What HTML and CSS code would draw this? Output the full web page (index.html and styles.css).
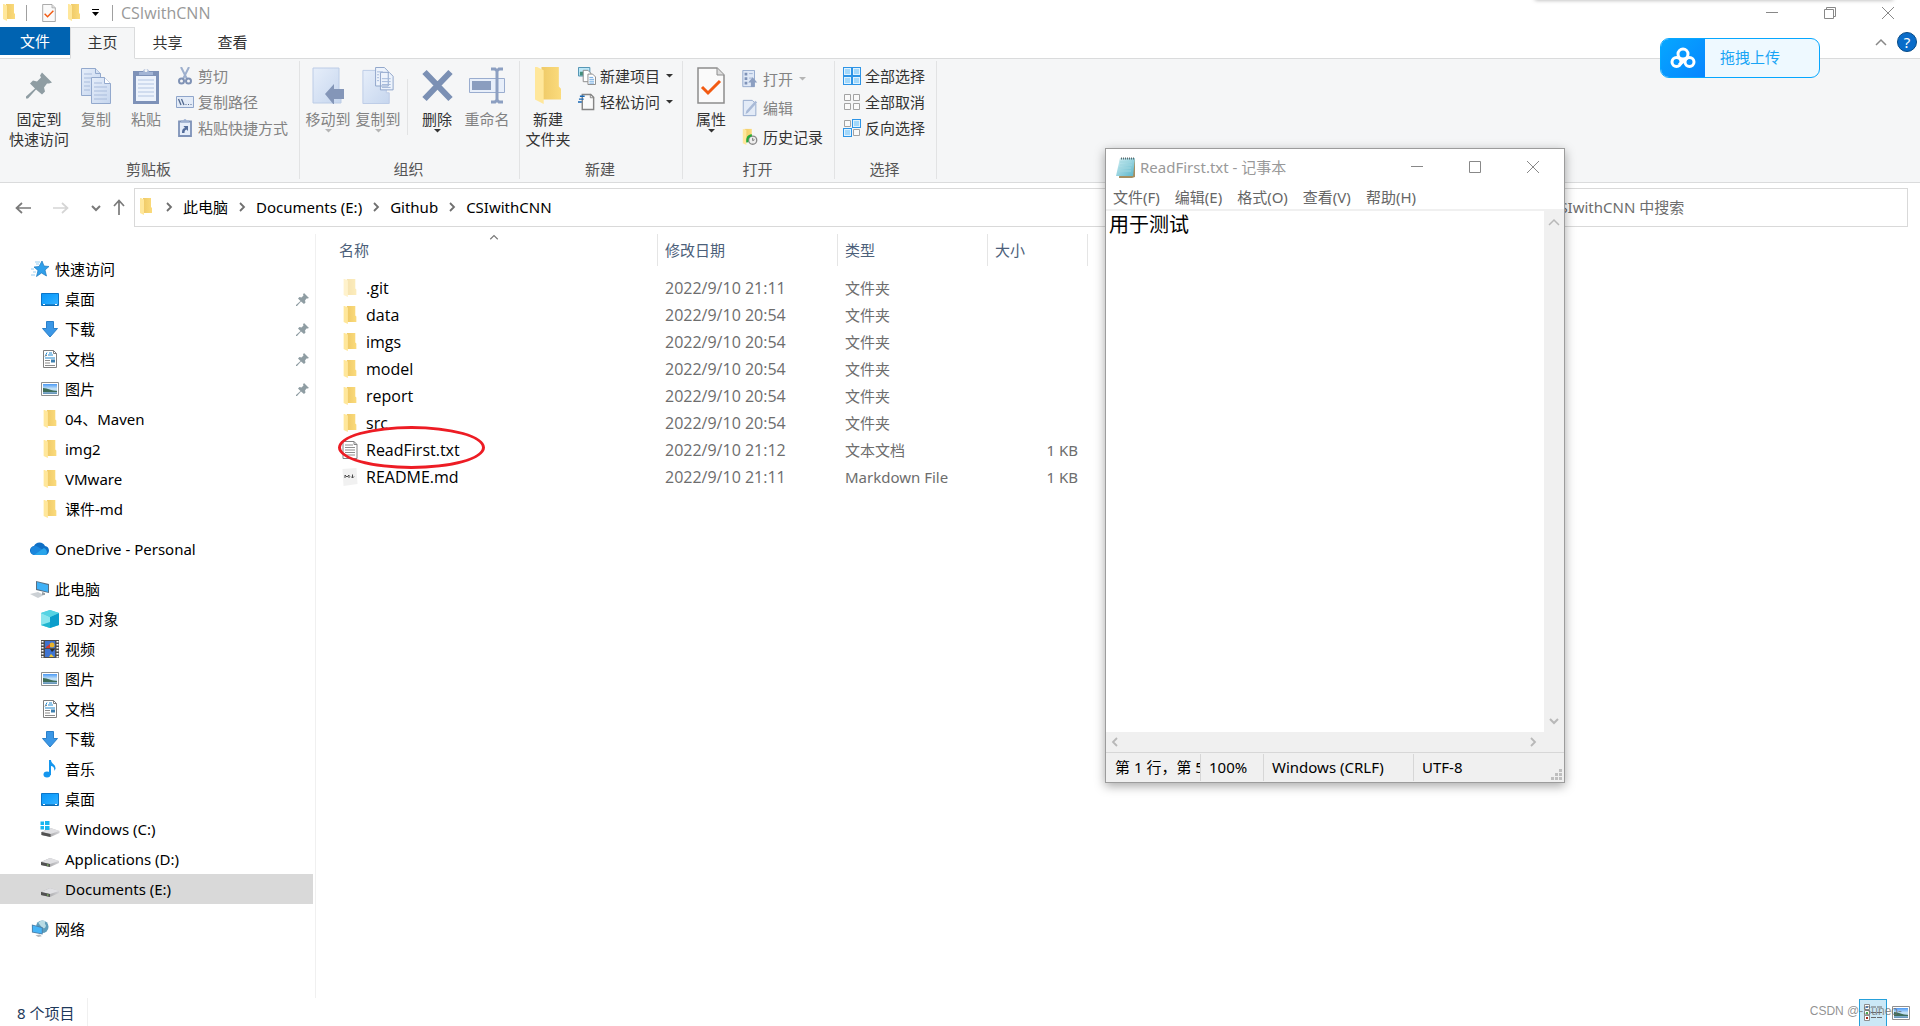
FILE: index.html
```html
<!DOCTYPE html>
<html lang="zh-CN">
<head>
<meta charset="utf-8">
<title>CSIwithCNN</title>
<link rel="stylesheet" href="styles.css">
</head>
<body>
<svg class="sprite" aria-hidden="true">
  <defs>
    <linearGradient id="gFolder" x1="0" x2="1" y1="0" y2="0"><stop offset="0" stop-color="#efca68"/><stop offset="1" stop-color="#fbdb7c"/></linearGradient>
    <linearGradient id="gDesk" x1="0" x2="1" y1="0" y2="1"><stop offset="0" stop-color="#0d94f5"/><stop offset=".5" stop-color="#1aa5ff"/><stop offset="1" stop-color="#3fb4ff"/></linearGradient>
    <linearGradient id="gPale" x1="0" x2="1" y1="0" y2="1"><stop offset="0" stop-color="#e6eefa"/><stop offset="1" stop-color="#c6d6ee"/></linearGradient>
    <linearGradient id="gSky" x1="0" x2="0" y1="0" y2="1"><stop offset="0" stop-color="#4c9af5"/><stop offset=".5" stop-color="#cbe6f7"/><stop offset="1" stop-color="#5e8fb5"/></linearGradient>
    <linearGradient id="gNote" x1="0" x2="1" y1="0" y2="1"><stop offset="0" stop-color="#d3f1f5"/><stop offset="1" stop-color="#5bb5c9"/></linearGradient>
    <linearGradient id="gDrive" x1="0" x2="1" y1="0" y2="0"><stop offset="0" stop-color="#8b8b8b"/><stop offset="1" stop-color="#d2d2d6"/></linearGradient>
  </defs>
  <symbol id="folder" viewBox="0 0 12 17"><path d="M3 0h8v9l1 1v5H3z" fill="url(#gFolder)"/><path d="M0 0h1l3 1.500v15.500L0 15z" fill="#ffe79b"/></symbol>
  <symbol id="check-doc" viewBox="0 0 28 37"><path d="M1 1h19l7 7v28H1z" fill="#fafafa" stroke="#8d8d8d" stroke-width="1.500"/><path d="M20 1v7h7" fill="#ddd" stroke="#8d8d8d"/><path d="M5 20l6 6L23 14" fill="none" stroke="#f25a12" stroke-width="3"/></symbol>
  <symbol id="pin" viewBox="0 0 26 26"><path d="M16 0l10 10-3 1-2 0-3 4 1 4-3 3-6-5-8 9-2 0 0-2 9-8-5-5 3-3 4 1 4-4-1-2z" fill="#8f9da3"/></symbol>
  <symbol id="docs" viewBox="0 0 30 37"><g fill="url(#gPale)" stroke="#93a9cd"><path d="M.5 1.500h14l5 5v22H.5z"/><path d="M14.500 1.500v5h5"/><path d="M10.500 10.500h13l6 6v20h-19z"/><path d="M23.500 10.500v6h6" fill="#fff"/></g><path d="M3 7h8M3 11h7M3 15h6M3 19h6M3 23h6M13 16h8M13 20h13M13 24h13M13 28h13M13 32h13" stroke="#a9bcdc"/></symbol>
  <symbol id="paste" viewBox="0 0 26 37"><path d="M0 4h26v33H0z" fill="#7e92b8"/><path d="M3 9h20v25H3z" fill="#edf3fc"/><path d="M5 13h16M5 17h16M5 21h16M5 25h16M5 29h16" stroke="#b3c5e2"/><path d="M6 8V5h4a3 3 0 0 1 6 0h4v3z" fill="#a3b5d5"/><circle cx="13" cy="3.500" r="1.500" fill="#f5f6f7"/></symbol>
  <symbol id="cut" viewBox="0 0 18 18"><path d="M5 0l6 12M13 0L7 12" stroke="#9dafcd" stroke-width="2" fill="none"/><circle cx="5.500" cy="14" r="2.500" fill="none" stroke="#7f92b5" stroke-width="2"/><circle cx="12.500" cy="14" r="2.500" fill="none" stroke="#7f92b5" stroke-width="2"/></symbol>
  <symbol id="copy-path" viewBox="0 0 18 18"><path d="M.5 3.500h17v11H.5z" fill="#e3ebf7" stroke="#8fa5ca"/><path d="M2.500 6l2.500 6M5.500 6L8 12" stroke="#52698f" stroke-width="1.300"/><path d="M9.500 11.500h6" stroke="#52698f" stroke-dasharray="1 1.500"/></symbol>
  <symbol id="paste-link" viewBox="0 0 18 18"><path d="M3 2.500h12v14.500H3z" fill="#e6eefa" stroke="#7e92b8" stroke-width="1.800"/><path d="M5 3.500V1.500h2.500a1.500 1.500 0 0 1 3 0H13v2z" fill="#9cafd0"/><path d="M6 14c0-3 .5-4.500 3-5L7.500 7H12v5l-1.500-1.500C9 11 8.500 12 8.500 14z" fill="#546d9b"/></symbol>
  <symbol id="move-to" viewBox="0 0 33 37"><path d="M1 1h26v23h2v12H1z" fill="url(#gPale)" stroke="#bccce6"/><path d="M13 27l9-10v5h10v10H22v6z" fill="#8496b8"/></symbol>
  <symbol id="copy-to" viewBox="0 0 33 38"><path d="M.5 3.500h24v23h3v11H.5z" fill="url(#gPale)" stroke="#bccce6"/><path d="M13.500.5h9l4 4v15h-13zM18.500 5.500h9l4 4v14h-13z" fill="#edf3fc" stroke="#8fa5ca"/><path d="M20 12h9M20 15h9M20 18h9M20 21h9M15 5h6M15 8h2M15 11h2M15 14h2" stroke="#a3b8da"/></symbol>
  <symbol id="delete" viewBox="0 0 32 37"><path d="M3 5l26 27M29 5L3 32" stroke="#7b90b4" stroke-width="6"/></symbol>
  <symbol id="rename" viewBox="0 0 36 37"><path d="M.5 11.500h35v14H.5z" fill="#e8effa" stroke="#9aadcf"/><path d="M3 14h19v9H3z" fill="#8a9dbf"/><path d="M22 2h4l2 2 2-2h4M28 4v29M22 35h4l2-2 2 2h4" fill="none" stroke="#8c9fc1" stroke-width="3"/></symbol>
  <symbol id="new-item" viewBox="0 0 19 19"><path d="M.5.5h12v9H.5z" fill="#bde8f8" stroke="#4a8fb0"/><path d="M2 5h5v4H2z" fill="#438f7c"/><path d="M5.500 3.500h5l3 3v9h-8z" fill="#fff" stroke="#8a8a8a"/><path d="M10.500 7.500h5l3 3v8h-8z" fill="#fff" stroke="#8a8a8a"/><path d="M12 11h4M12 13h5M12 15h5M12 17h5" stroke="#69a6e0"/></symbol>
  <symbol id="easy" viewBox="0 0 19 19"><path d="M4.500 1.500h9l3 3v13h-12z" fill="#fafafa" stroke="#858585" stroke-width="1.500"/><path d="M13 1v4h4" fill="none" stroke="#858585"/><path d="M2 3.500h5M1 6.500h5M0 9.500h4" stroke="#1667b5" stroke-width="1.500"/></symbol>
  <symbol id="open" viewBox="0 0 18 20"><path d="M1 .5h13v18H1z" fill="#dfe8f6" stroke="#8fa5ca"/><path d="M3 3h3v3H3zM3 8h3v3H3zM3 13h3v3H3z" fill="#7e92b8"/><path d="M8 4h4M8 9h4" stroke="#9cafd0"/><path d="M12 8l5 6h-3v5h-4v-5H7z" fill="#8c9fc1"/></symbol>
  <symbol id="edit" viewBox="0 0 18 20"><path d="M1.500 1.500h10l4 4v13h-14z" fill="#e3ebf7" stroke="#8fa5ca"/><path d="M4 17l1-4L15 2l2 2L7 15z" fill="#a9bad7"/></symbol>
  <symbol id="history" viewBox="0 0 18 20"><path d="M3 1h8v14H3z" fill="url(#gFolder)"/><path d="M1 1l4 1v17l-4-2z" fill="#ffe79b"/><circle cx="12" cy="13.500" r="4.500" fill="#eee" stroke="#888" stroke-width="1.500"/><path d="M12 11v3l2-1" fill="none" stroke="#666"/><path d="M6 16c-.5-5 2-7.500 5-8" fill="none" stroke="#23a83b" stroke-width="2.500"/></symbol>
  <symbol id="sel-all" viewBox="0 0 18 18"><path d="M0 0h18v18H0z" fill="#2d94e6"/><path d="M1 1h7v7H1zM10 1h7v7h-7zM1 10h7v7H1zM10 10h7v7h-7z" fill="#dff2fe"/><path d="M2 2h5v5H2zM11 2h5v5h-5zM2 11h5v5H2zM11 11h5v5h-5z" fill="#a3d8fb"/></symbol>
  <symbol id="sel-none" viewBox="0 0 18 18"><path d="M1.500 1.500h6v6h-6zM10.500 1.500h6v6h-6zM1.500 10.500h6v6h-6zM10.500 10.500h6v6h-6z" fill="#fafafa" stroke="#a3a3a3"/></symbol>
  <symbol id="sel-inv" viewBox="0 0 18 18"><path d="M1.500 1.500h6v6h-6zM10.500 10.500h6v6h-6z" fill="#fafafa" stroke="#a3a3a3"/><path d="M9 0h9v9H9zM0 9h9v9H0z" fill="#2d94e6"/><path d="M10 1h7v7h-7zM1 10h7v7H1z" fill="#dff2fe"/><path d="M11 2h5v5h-5zM2 11h5v5H2z" fill="#a3d8fb"/></symbol>
  <symbol id="star" viewBox="0 0 18 18"><path d="M11 1l2 5 5 .5-4 3.500 1.500 6-5-3-5 3.500 1.500-6L3 7l5-.5z" fill="#2f9fea" stroke="#1c79bd" stroke-width=".7"/><path d="M4 2h5M5 4h3M0 9h3M2 12h3M0 15h4" stroke="#7cc0ee" stroke-width=".8"/></symbol>
  <symbol id="desktop" viewBox="0 0 18 18"><path d="M.5 3.500h17v12H.5z" fill="url(#gDesk)" stroke="#0b76c9"/><path d="M1 15h16" stroke="#0a5d9e"/><path d="M2 14.500h2M14 14.500h2" stroke="#fff"/></symbol>
  <symbol id="download" viewBox="0 0 18 18"><path d="M5.500 1.500h7v7h4L9 17 1.500 8.500h4z" fill="#3b97e6" stroke="#2b80c9"/></symbol>
  <symbol id="document" viewBox="0 0 18 18"><path d="M2.500.5h10l3 3v14h-13z" fill="#fff" stroke="#7f7f7f"/><path d="M12.500.5v3h3" fill="none" stroke="#7f7f7f"/><path d="M4 6.500l2-4M8 3h3M7 5h5" stroke="#2389cf"/><path d="M4 8h10" stroke="#2389cf"/><path d="M4 10.500h5M4 13h5M4 15.500h10M4 5.500h2" stroke="#8b8b8b"/><path d="M10 9.500h4v3h-4z" fill="#3a7fb0"/></symbol>
  <symbol id="picture" viewBox="0 0 18 18"><path d="M.5 2.500h17v13H.5z" fill="#fff" stroke="#8f8f8f"/><path d="M2 4h14v10H2z" fill="url(#gSky)"/><path d="M2 8c5 0 8 3 14 3v1H2z" fill="#3f6e5a"/></symbol>
  <symbol id="cloud" viewBox="0 0 20 14"><path d="M5 13a4.500 4.500 0 0 1-1-9 6 6 0 0 1 11 0 4.700 4.700 0 0 1 1 9z" fill="#0f6fc5"/><path d="M4 4.200a5 5 0 0 1 4 .8l9 5-12 3a4.500 4.500 0 0 1-1-8.800z" fill="#1b86dc"/><path d="M4 13l10-7a4.500 4.500 0 0 1 2 7z" fill="#28a4ea"/></symbol>
  <symbol id="pc" viewBox="0 0 20 18"><path d="M6 1l13 3v9L6 10z" fill="#5a6f82"/><path d="M7 2l11 3v7L7 9z" fill="#3fb1f7"/><path d="M0 14l8-2 6 3-6 3z" fill="#ccd1d5"/><path d="M12 12l3 1v2h-3z" fill="#9aa2a8"/></symbol>
  <symbol id="cube" viewBox="0 0 18 18"><path d="M9 0l9 3v12l-9 3-9-3V3z" fill="#49cbe0"/><path d="M0 3l9 4v11l-9-3z" fill="#8ae5ee"/><path d="M9 7l9-4v12l-9 3z" fill="#0b9dcb"/><path d="M9 0l9 3-9 4-9-4z" fill="#55d3e3"/><path d="M0 15l9-3v6z" fill="#20b5cf"/></symbol>
  <symbol id="video" viewBox="0 0 18 18"><path d="M0 0h18v18H0z" fill="#4d4d4d"/><path d="M4 1h10v7H4zM4 9h10v8H4z" fill="#3f74d2"/><path d="M1.500 1v17M16.500 1v17" stroke="#fff" stroke-width="2" stroke-dasharray="1.500 1.500"/><circle cx="11" cy="5" r="2.500" fill="#e7b32b"/><path d="M5 7l4-3v4H5z" fill="#d53b31"/><path d="M8 17l2-3 3 3z" fill="#f1c92d"/><path d="M9 9h5l-3 3z" fill="#292929"/></symbol>
  <symbol id="music" viewBox="0 0 18 18"><ellipse cx="6" cy="14.500" rx="3.500" ry="3" fill="#1496ee"/><path d="M8 0h2c0 4 5 4 4.500 9l-1.500 2c1-3-1-5-3-5v9H8z" fill="#1496ee"/></symbol>
  <symbol id="drive" viewBox="0 0 18 18"><path d="M0 12l9-4 9 3v2l-9 4-9-2z" fill="url(#gDrive)"/><path d="M0 12l9-4 9 3-9 3z" fill="#e0e0e3"/><path d="M0 12l9 2v3l-9-2z" fill="#515151"/><path d="M6 14.500h1.500v1H6z" fill="#8bdc5e"/></symbol>
  <symbol id="win-drive" viewBox="0 0 19 18"><path d="M1 12l9-4 9 3v2l-9 4-9-2z" fill="url(#gDrive)"/><path d="M1 12l9-4 9 3-9 3z" fill="#e0e0e3"/><path d="M1 12l9 2v3l-9-2z" fill="#515151"/><path d="M0 1.500h3.500V5H0zM4.500 1H9v4H4.500zM0 6h3.500v3.500H0zM4.500 6H9v4H4.500z" fill="#19b6ef"/></symbol>
  <symbol id="network" viewBox="0 0 20 20"><circle cx="12.500" cy="7.500" r="7" fill="#5d9cba"/><path d="M8 3c3-3 7-3 8-1-2 3 2 3 0 6s-5-1-8-5z" fill="#b8dbe4"/><path d="M1 5l12 3v8L1 14z" fill="#4c7fa8"/><path d="M2 6l10 3v6L2 13z" fill="#46b4f6"/><path d="M5 17l5-1 2 2-4 1z" fill="#b3b9be"/></symbol>
  <symbol id="text-file" viewBox="0 0 15 18"><path d="M.5.500h11l3 3v14H.5z" fill="#fff" stroke="#828282"/><path d="M11.500.5v3h3" fill="none" stroke="#828282"/><path d="M2.500 4h8M2.500 6.500h10M2.500 9h10M2.500 11.500h10M2.500 14h10" stroke="#8f8f8f"/></symbol>
  <symbol id="md-file" viewBox="0 0 15 18"><path d="M0 1l14-1 1 16-14 2z" fill="#f1f1f1"/><path d="M2.500 10V7L4.500 9 6.500 7v3M10 6.500V10M8.500 8.500L10 10l1.500-1.500" fill="none" stroke="#4d4d4d"/></symbol>
  <symbol id="notepad" viewBox="0 0 20 21"><path d="M4 2h15v18l-3 1H3z" fill="#a58f61"/><path d="M4 1h15l-2 18H0z" fill="url(#gNote)"/><path d="M5 1.500h13" stroke="#5f6a6d" stroke-width="2" stroke-dasharray="1 1"/><path d="M4 5h12M4 8h12M3 11h12M3 14h12" stroke="#9fd6df"/></symbol>
  <symbol id="right" viewBox="0 0 8 10"><path d="M2 1l4 4-4 4" fill="none" stroke="currentColor" stroke-width="1.800"/></symbol>
  <symbol id="left" viewBox="0 0 8 10"><path d="M6 1L2 5l4 4" fill="none" stroke="currentColor" stroke-width="1.800"/></symbol>
  <symbol id="down" viewBox="0 0 10 8"><path d="M1 2l4 4 4-4" fill="none" stroke="currentColor" stroke-width="2"/></symbol>
  <symbol id="up" viewBox="0 0 12 8"><path d="M1 7l5-5 5 5" fill="none" stroke="currentColor" stroke-width="1.500"/></symbol>
  <symbol id="arrow" viewBox="0 0 16 14"><path d="M7 2L1.500 7 7 12M1 7h15" fill="none" stroke="currentColor" stroke-width="1.700"/></symbol>
  <symbol id="caret" viewBox="0 0 7 4"><path d="M0 0h7L3.500 3.500z" fill="currentColor"/></symbol>
  <symbol id="customize" viewBox="0 0 7 8"><path d="M0 .5h7" stroke="currentColor"/><path d="M0 3h7L3.500 7z" fill="currentColor"/></symbol>
  <symbol id="minimize" viewBox="0 0 12 12"><path d="M0 5.500h12" stroke="currentColor"/></symbol>
  <symbol id="maximize" viewBox="0 0 12 12"><path d="M.5.5h11v11H.5z" fill="none" stroke="currentColor"/></symbol>
  <symbol id="restore" viewBox="0 0 12 12"><path d="M.5 2.500h9v9h-9zM2.500 2.500v-2h9v9h-2" fill="none" stroke="currentColor"/></symbol>
  <symbol id="close" viewBox="0 0 12 12"><path d="M0 0l12 12M12 0L0 12" stroke="currentColor"/></symbol>
</svg>

<div class="explorer">
  <header class="titlebar">
    <svg class="tiny-folder"><use href="#folder"/></svg>
    <span class="bar bar-a"></span>
    <button class="plain" aria-label="属性"><svg class="tiny-doc"><use href="#check-doc"/></svg></button>
    <button class="plain" aria-label="新建文件夹"><svg class="tiny-folder"><use href="#folder"/></svg></button>
    <button class="plain customize" aria-label="自定义快速访问工具栏"><svg><use href="#customize"/></svg></button>
    <span class="bar"></span>
    <h1 class="title">CSIwithCNN</h1>
    <div class="controls">
      <button class="plain" aria-label="最小化"><svg class="win"><use href="#minimize"/></svg></button>
      <button class="plain" aria-label="还原"><svg class="win"><use href="#restore"/></svg></button>
      <button class="plain" aria-label="关闭"><svg class="win"><use href="#close"/></svg></button>
    </div>
  </header>

  <nav class="tabs">
    <button class="tab file">文件</button>
    <button class="tab active">主页</button>
    <button class="tab">共享</button>
    <button class="tab">查看</button>
    <div class="tab-tools">
      <button class="plain" aria-label="折叠功能区"><svg class="up"><use href="#up"/></svg></button>
      <button class="help" aria-label="帮助">?</button>
    </div>
  </nav>

  <section class="ribbon">
    <div class="group g-clip">
      <div class="tools">
        <button class="big wide"><svg class="ic pin"><use href="#pin"/></svg><span>固定到<br>快速访问</span></button>
        <button class="big off"><svg class="ic w30"><use href="#docs"/></svg><span>复制</span></button>
        <button class="big off"><svg class="ic w26"><use href="#paste"/></svg><span>粘贴</span></button>
        <div class="stack s5">
          <button class="small off"><svg><use href="#cut"/></svg>剪切</button>
          <button class="small off"><svg><use href="#copy-path"/></svg>复制路径</button>
          <button class="small off"><svg><use href="#paste-link"/></svg>粘贴快捷方式</button>
        </div>
      </div>
      <div class="group-name">剪贴板</div>
    </div>
    <div class="group g-org">
      <div class="tools">
        <button class="big off"><svg class="ic w33"><use href="#move-to"/></svg><span>移动到</span><svg class="caret"><use href="#caret"/></svg></button>
        <button class="big off"><svg class="ic w33"><use href="#copy-to"/></svg><span>复制到</span><svg class="caret"><use href="#caret"/></svg></button>
        <span class="split"></span>
        <button class="big"><svg class="ic w33"><use href="#delete"/></svg><span>删除</span><svg class="caret"><use href="#caret"/></svg></button>
        <button class="big off"><svg class="ic w36"><use href="#rename"/></svg><span>重命名</span></button>
      </div>
      <div class="group-name">组织</div>
    </div>
    <div class="group g-new">
      <div class="tools">
        <button class="big"><svg class="ic w26"><use href="#folder"/></svg><span>新建<br>文件夹</span></button>
        <div class="stack s5">
          <button class="small"><svg><use href="#new-item"/></svg>新建项目<svg class="caret"><use href="#caret"/></svg></button>
          <button class="small"><svg><use href="#easy"/></svg>轻松访问<svg class="caret"><use href="#caret"/></svg></button>
        </div>
      </div>
      <div class="group-name">新建</div>
    </div>
    <div class="group g-open">
      <div class="tools">
        <button class="big"><svg class="ic w30"><use href="#check-doc"/></svg><span>属性</span><svg class="caret"><use href="#caret"/></svg></button>
        <div class="stack s5 loose">
          <button class="small off"><svg><use href="#open"/></svg>打开<svg class="caret"><use href="#caret"/></svg></button>
          <button class="small off"><svg><use href="#edit"/></svg>编辑</button>
          <button class="small"><svg><use href="#history"/></svg>历史记录</button>
        </div>
      </div>
      <div class="group-name">打开</div>
    </div>
    <div class="group g-sel">
      <div class="tools">
        <div class="stack s5">
          <button class="small"><svg><use href="#sel-all"/></svg>全部选择</button>
          <button class="small"><svg><use href="#sel-none"/></svg>全部取消</button>
          <button class="small"><svg><use href="#sel-inv"/></svg>反向选择</button>
        </div>
      </div>
      <div class="group-name">选择</div>
    </div>
  </section>

  <div class="address-row">
    <div class="history-nav">
      <button class="plain" aria-label="后退"><svg class="arrow"><use href="#arrow"/></svg></button>
      <button class="plain forward" aria-label="前进"><svg class="arrow"><use href="#arrow"/></svg></button>
      <button class="plain" aria-label="最近位置"><svg class="down"><use href="#down"/></svg></button>
      <button class="plain rise" aria-label="上移"><svg class="arrow"><use href="#arrow"/></svg></button>
    </div>
    <div class="crumbs">
      <svg class="tiny-folder"><use href="#folder"/></svg>
      <svg class="right"><use href="#right"/></svg><a href="#">此电脑</a>
      <svg class="right"><use href="#right"/></svg><a href="#">Documents (E:)</a>
      <svg class="right"><use href="#right"/></svg><a href="#">Github</a>
      <svg class="right"><use href="#right"/></svg><a href="#">CSIwithCNN</a>
    </div>
    <input class="search" type="search" aria-label="搜索" placeholder="在 CSIwithCNN 中搜索">
  </div>

  <div class="content">
    <nav class="sidebar">
      <ul>
        <li><a class="root" href="#"><svg><use href="#star"/></svg>快速访问</a></li>
        <li><a href="#"><svg><use href="#desktop"/></svg>桌面<svg class="pinned"><use href="#pin"/></svg></a></li>
        <li><a href="#"><svg><use href="#download"/></svg>下载<svg class="pinned"><use href="#pin"/></svg></a></li>
        <li><a href="#"><svg><use href="#document"/></svg>文档<svg class="pinned"><use href="#pin"/></svg></a></li>
        <li><a href="#"><svg><use href="#picture"/></svg>图片<svg class="pinned"><use href="#pin"/></svg></a></li>
        <li><a href="#"><svg><use href="#folder"/></svg>04、Maven</a></li>
        <li><a href="#"><svg><use href="#folder"/></svg>img2</a></li>
        <li><a href="#"><svg><use href="#folder"/></svg>VMware</a></li>
        <li><a href="#"><svg><use href="#folder"/></svg>课件-md</a></li>
      </ul>
      <ul>
        <li><a class="root" href="#"><svg><use href="#cloud"/></svg>OneDrive - Personal</a></li>
      </ul>
      <ul>
        <li><a class="root" href="#"><svg><use href="#pc"/></svg>此电脑</a></li>
        <li><a href="#"><svg><use href="#cube"/></svg>3D 对象</a></li>
        <li><a href="#"><svg><use href="#video"/></svg>视频</a></li>
        <li><a href="#"><svg><use href="#picture"/></svg>图片</a></li>
        <li><a href="#"><svg><use href="#document"/></svg>文档</a></li>
        <li><a href="#"><svg><use href="#download"/></svg>下载</a></li>
        <li><a href="#"><svg><use href="#music"/></svg>音乐</a></li>
        <li><a href="#"><svg><use href="#desktop"/></svg>桌面</a></li>
        <li><a href="#"><svg><use href="#win-drive"/></svg>Windows (C:)</a></li>
        <li><a href="#"><svg><use href="#drive"/></svg>Applications (D:)</a></li>
        <li><a class="current" href="#"><svg><use href="#drive"/></svg>Documents (E:)</a></li>
      </ul>
      <ul>
        <li><a class="root" href="#"><svg><use href="#network"/></svg>网络</a></li>
      </ul>
    </nav>

    <main class="files">
      <table>
        <colgroup><col class="c-name"><col class="c-date"><col class="c-type"><col class="c-size"></colgroup>
        <thead>
          <tr><th>名称<svg class="sort"><use href="#up"/></svg></th><th>修改日期</th><th>类型</th><th>大小</th></tr>
        </thead>
        <tbody>
          <tr><td><div class="name hidden-item"><svg><use href="#folder"/></svg>.git</div></td><td class="date">2022/9/10 21:11</td><td>文件夹</td><td></td></tr>
          <tr><td><div class="name"><svg><use href="#folder"/></svg>data</div></td><td class="date">2022/9/10 20:54</td><td>文件夹</td><td></td></tr>
          <tr><td><div class="name"><svg><use href="#folder"/></svg>imgs</div></td><td class="date">2022/9/10 20:54</td><td>文件夹</td><td></td></tr>
          <tr><td><div class="name"><svg><use href="#folder"/></svg>model</div></td><td class="date">2022/9/10 20:54</td><td>文件夹</td><td></td></tr>
          <tr><td><div class="name"><svg><use href="#folder"/></svg>report</div></td><td class="date">2022/9/10 20:54</td><td>文件夹</td><td></td></tr>
          <tr><td><div class="name"><svg><use href="#folder"/></svg>src</div></td><td class="date">2022/9/10 20:54</td><td>文件夹</td><td></td></tr>
          <tr><td><div class="name"><svg><use href="#text-file"/></svg>ReadFirst.txt<span class="ring"></span></div></td><td class="date">2022/9/10 21:12</td><td>文本文档</td><td>1 KB</td></tr>
          <tr><td><div class="name"><svg><use href="#md-file"/></svg>README.md</div></td><td class="date">2022/9/10 21:11</td><td>Markdown File</td><td>1 KB</td></tr>
        </tbody>
      </table>
    </main>
  </div>

  <footer class="status">
    <span class="count">8 个项目</span>
    <div class="views">
      <button class="view on" aria-label="详细信息"><svg viewBox="0 0 18 18"><path d="M.5.5h5v5h-5zM.5 6.500h5v5h-5zM.5 11.500h5v5h-5z" fill="#fff" stroke="#8d8d8d"/><path d="M2 2h2v2H2z" fill="#4b86c9"/><path d="M2 8h2v2H2z" fill="#4aa84e"/><path d="M2 13h2v2H2z" fill="#a52a1c"/><path d="M7 3h5M13 3h5M7 8.500h5M13 8.500h5M7 13.500h5M13 13.500h5" stroke="#6a6a6a"/></svg></button>
      <button class="view" aria-label="大图标"><svg><use href="#picture"/></svg></button>
    </div>
  </footer>
</div>

<div class="edge-shadow"></div>

<button class="upload">
  <span class="upload-logo"><svg viewBox="0 0 26 22"><g fill="none" stroke="#fff" stroke-width="3"><circle cx="13" cy="7" r="5"/><circle cx="6.500" cy="15" r="4.500"/><circle cx="19.500" cy="15" r="4.500"/></g><path d="M9 18l8-7" stroke="#fff" stroke-width="3"/></svg></span>
  <span class="upload-text">拖拽上传</span>
</button>

<section class="notepad">
  <header class="note-title">
    <svg class="note-icon"><use href="#notepad"/></svg>
    <h2>ReadFirst.txt - 记事本</h2>
    <div class="controls">
      <button class="plain" aria-label="最小化"><svg class="win"><use href="#minimize"/></svg></button>
      <button class="plain" aria-label="最大化"><svg class="win"><use href="#maximize"/></svg></button>
      <button class="plain" aria-label="关闭"><svg class="win"><use href="#close"/></svg></button>
    </div>
  </header>
  <nav class="menu"><button>文件(F)</button><button>编辑(E)</button><button>格式(O)</button><button>查看(V)</button><button>帮助(H)</button></nav>
  <div class="editor">
    <textarea aria-label="文本" spellcheck="false">用于测试</textarea>
    <div class="vscroll"><svg class="up"><use href="#up"/></svg><svg class="down"><use href="#down"/></svg></div>
    <div class="hscroll"><svg class="right"><use href="#left"/></svg><svg class="right"><use href="#right"/></svg></div>
  </div>
  <footer class="note-status">
    <span class="pos">第 1 行，第 5</span><span class="zoom">100%</span><span class="eol">Windows (CRLF)</span><span class="enc">UTF-8</span>
    <svg class="grip" viewBox="0 0 12 12"><path d="M8 0h3v3H8zM4 4h3v3H4zM8 4h3v3H8zM0 8h3v3H0zM4 8h3v3H4zM8 8h3v3H8z" fill="#bfbfbf"/></svg>
  </footer>
</section>

<div class="watermark">CSDN @-Suneo-</div>
</body>
</html>
```

FILE: styles.css
```css
* { box-sizing: border-box; }

body {
  margin: 0;
  height: 100vh;
  overflow: hidden;
  position: relative;
  background: #fff;
  color: #000;
  font: 15px/20px "Noto Sans", "Noto Sans CJK SC", sans-serif;
}

button, input, textarea { font: inherit; color: inherit; }
button { padding: 0; border: 0; background: none; }
a { color: inherit; text-decoration: none; }
svg { display: block; flex: none; }
ul { list-style: none; margin: 0; padding: 0; }
h1, h2 { margin: 0; font-size: 15px; font-weight: 400; }
.sprite { position: absolute; width: 0; height: 0; }

.explorer { display: flex; flex-direction: column; height: 100%; }

/* title bar */
.titlebar { display: flex; align-items: center; height: 27px; padding: 0 0 2px 3px; }
.tiny-folder { width: 12px; height: 17px; }
.tiny-doc { width: 14px; height: 18px; }
.bar { width: 1px; height: 16px; background: #a0a0a0; }
.bar-a { margin: 0 15px 0 11px; }
.plain { display: flex; align-items: center; justify-content: center; }
.titlebar .plain + .plain { margin-left: 12px; }
.titlebar .customize { margin-right: 13px; }
.customize svg { width: 7px; height: 8px; }
.caret { width: 7px; height: 4px; }
.title { margin-left: 8px; color: #999; font: 16px/20px "Open Sans", sans-serif; }
.controls { display: flex; margin-left: auto; color: #888; }
.controls .plain, .titlebar .controls .plain + .plain { width: 58px; height: 24px; margin: 0; }
.titlebar .controls { padding-right: 3px; }
.win { width: 12px; height: 12px; }

/* ribbon tabs */
.tabs { display: flex; height: 32px; border-bottom: 1px solid #dadbdc; }
.tab { width: 65px; height: 32px; padding-bottom: 2px; color: #333; border: 1px solid transparent; }
.tab.file { width: 70px; height: 28px; padding-bottom: 0; background: #0063b1; color: #fff; }
.tab.active { background: #f5f6f7; border-color: #dadbdc #dadbdc #f5f6f7; }
.tab-tools { display: flex; align-items: center; gap: 10px; margin-left: auto; padding: 0 3px 1px 0; color: #888; }
.up { width: 12px; height: 8px; }
.help { width: 20px; height: 20px; border: 1px solid #064a86; border-radius: 50%; background: #0a6cc9; color: #fff; line-height: 18px; }

/* ribbon */
.ribbon { display: flex; height: 124px; padding: 2px 0 3px; background: #f5f6f7; border-bottom: 1px solid #dadbdc; color: #333; }
.group { display: flex; flex-direction: column; justify-content: space-between; border-right: 1px solid #e2e3e4; }
.g-clip { width: 300px; }
.g-org { width: 220px; }
.g-new { width: 163px; }
.g-open { width: 152px; }
.g-sel { width: 102px; }
.tools { display: flex; padding-left: 3px; }
.g-clip .tools { padding-left: 7px; }
.group-name { padding-right: 2px; text-align: center; color: #555; }
.big { display: flex; flex-direction: column; align-items: center; width: 50px; padding-top: 6px; white-space: nowrap; }
.big.wide { width: 64px; }
.ic { height: 37px; margin-bottom: 5px; }
.pin { width: 26px; }
.w26 { width: 26px; }
.w30 { width: 30px; }
.w33 { width: 33px; }
.w36 { width: 36px; }
.off { color: #838383; }
.off .caret { color: #b5b5b5; }
.split { width: 1px; height: 56px; margin: 18px 4px 0; background: #e2e3e4; }
.stack { display: flex; flex-direction: column; padding-top: 2px; }
.s5 { padding-left: 5px; }
.small { display: flex; align-items: center; height: 26px; gap: 4px; white-space: nowrap; }
.small svg { width: 18px; height: 18px; }
.small .caret { width: 7px; height: 4px; margin-left: 2px; }
.loose { padding-top: 3px; }
.loose .small { height: 29px; }

/* address row */
.address-row { display: flex; height: 44px; padding: 5px 12px 0 12px; }
.history-nav { display: grid; grid-template-columns: 22px 54px 16px 30px; align-items: center; color: #7a7a7a; height: 39px; }
.forward { color: #d5d5d5; }
.forward svg { transform: scaleX(-1); }
.rise { padding-bottom: 1px; }
.rise svg { transform: rotate(90deg); }
.arrow { width: 16px; height: 14px; }
.down { width: 10px; height: 8px; }
.crumbs { display: flex; flex: 1; align-items: center; height: 39px; padding: 0 0 2px 5px; border: 1px solid #d9d9d9; }
.crumbs .right { margin: 0 10px; color: #6f6f6f; }
.crumbs .tiny-folder { margin-right: 3px; }
.right { width: 8px; height: 10px; }
.search { width: 396px; height: 39px; margin-left: 16px; padding: 0 18px 2px; border: 1px solid #d9d9d9; background: #fff; }
.search::placeholder { color: #6d6d6d; opacity: 1; }

/* navigation pane and file list */
.content { display: flex; flex: 1; min-height: 0; padding-top: 7px; }
.sidebar { width: 316px; padding: 20px 2px 0 0; border-right: 1px solid #f0f0f0; overflow: hidden; }
.sidebar ul + ul { margin-top: 10px; }
.sidebar a { display: flex; align-items: center; height: 30px; padding-left: 40px; gap: 5px; }
.sidebar a.root { padding-left: 30px; }
.sidebar svg { width: 20px; height: 18px; }
.sidebar .pinned { width: 13px; height: 13px; margin: 0 4px 0 auto; }
.sidebar .current { background: #d9d9d9; }

.files { padding-left: 15px; }
table { border-collapse: separate; border-spacing: 0; table-layout: fixed; width: 757px; }
.c-name { width: 327px; }
.c-date { width: 180px; }
.c-type { width: 150px; }
.c-size { width: 100px; }
th { position: relative; height: 32px; padding: 0 7px; border-right: 1px solid #e5e5e5; color: #4c607a; font-weight: 400; text-align: left; }
th:first-child { padding-left: 8px; }
.sort { position: absolute; left: 158px; top: 0; width: 10px; height: 6px; color: #777; }
tbody::before { content: ""; display: block; height: 8px; }
td { height: 27px; padding: 0 7px; color: #6d6d6d; }
td:last-child { padding-right: 10px; text-align: right; }
.name { position: relative; display: flex; align-items: center; gap: 7px; padding-left: 3px; color: #000; }
.name, .date { font-family: "Open Sans", sans-serif; font-size: 16px; }
.name svg { width: 18px; height: 18px; }
.hidden-item svg { opacity: .5; }
.ring { position: absolute; left: 0; top: -14px; width: 147px; height: 43px; border: 3px solid #ed1c24; border-radius: 50%; }

/* status bar */
.status { display: flex; height: 28px; padding-left: 17px; color: #1e395b; }
.count { height: 28px; padding: 5px 13px 0 0; border-right: 1px solid #f0f0f0; }
.views { display: flex; margin-left: auto; padding: 1px 5px 0 0; }
.view { display: flex; align-items: center; justify-content: center; width: 28px; height: 28px; }
.view svg { width: 18px; height: 18px; }
.view.on { border: 1px solid #26a0da; background: #cbe8f6; }

/* lower edge of the window above */
.edge-shadow { position: absolute; top: -4px; right: 27px; width: 358px; height: 4px; box-shadow: 0 0 4px rgba(0, 0, 0, .35); }

/* drag-and-drop upload widget */
.upload { position: absolute; top: 38px; right: 100px; display: flex; width: 160px; height: 40px; overflow: hidden; border: 1px solid #06a7ff; border-radius: 9px; background: #eef9ff; color: #1aa5f5; }
.upload-logo { display: flex; align-items: center; justify-content: center; width: 44px; height: 100%; background: linear-gradient(135deg, #06a7ff, #0785ff); }
.upload-logo svg { width: 26px; height: 22px; }
.upload-text { padding: 8px 0 0 15px; }

/* notepad window */
.notepad { position: absolute; top: 148px; right: 355px; display: flex; flex-direction: column; width: 460px; height: 635px; border: 1px solid #9c9c9c; background: #fff; box-shadow: 0 3px 10px rgba(0, 0, 0, .35); }
.note-title { display: flex; align-items: center; height: 36px; padding-left: 10px; color: #999; }
.note-title .controls { padding-right: 2px; }
.note-icon { width: 20px; height: 21px; margin-right: 4px; }
.menu { display: flex; gap: 15px; height: 26px; padding-left: 7px; border-bottom: 2px solid #f0f0f0; color: #666; }
.menu button { height: 24px; line-height: 24px; }
.editor { display: grid; flex: 1; grid-template-columns: 1fr 20px; grid-template-rows: 1fr 20px; background: #f0f0f0; color: #b8b8b8; }
textarea { padding: 0 3px; border: 0; resize: none; outline: 0; background: #fff; color: #000; font-size: 20px; line-height: 28px; }
.vscroll { display: flex; flex-direction: column; align-items: center; justify-content: space-between; padding: 7px 0; }
.hscroll { display: flex; align-items: center; justify-content: space-between; padding: 0 7px 0 5px; }
.note-status { position: relative; display: flex; height: 30px; border-top: 1px solid #d7d7d7; background: #f0f0f0; line-height: 26px; white-space: nowrap; }
.note-status span { height: 27px; margin-top: 1px; padding-left: 8px; overflow: hidden; border-right: 1px solid #d7d7d7; }
.note-status .pos { width: 95px; padding-left: 9px; }
.note-status .zoom { width: 63px; }
.note-status .eol { width: 150px; }
.note-status .enc { flex: 1; border-right: 0; }
.grip { position: absolute; right: 1px; bottom: 1px; width: 12px; height: 12px; }

.watermark { position: absolute; right: 18px; bottom: 5px; color: rgba(110, 110, 110, .75); font: 12px/20px "Liberation Sans", sans-serif; }
```
